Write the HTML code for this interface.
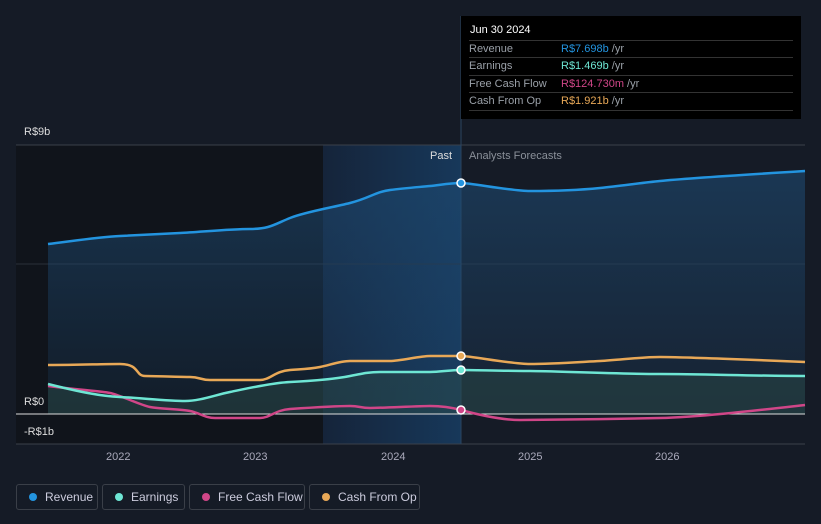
<!DOCTYPE html><html><head><style>
body{margin:0;width:821px;height:524px;background:#151b26;font-family:"Liberation Sans",sans-serif;overflow:hidden;position:relative}
.tt{position:absolute;left:461px;top:16px;width:340px;height:103px;background:#000;color:#fff;font-size:11px}
.tt .h{position:absolute;left:9px;top:8px;font-size:11px}
.tt .r{position:absolute;left:8px;width:324px;border-top:1px solid #333;height:17px;line-height:17px;color:#9aa0a8}
.tt .r span{position:absolute;left:92px}
.leg{position:absolute;top:484px;height:26px;border:1px solid #3a3f48;border-radius:3px;color:#ccd;font-size:12px;line-height:24px;box-sizing:border-box;padding-left:28px;white-space:nowrap}
.leg i{position:absolute;left:12px;top:8px;width:8px;height:8px;border-radius:50%}
.ax{position:absolute;color:#ddd;font-size:11px}
</style></head><body>
<svg width="821" height="524" style="position:absolute;left:0;top:0">
<defs><linearGradient id="hg" x1="0" x2="1"><stop offset="0" stop-color="#15243a"/><stop offset="1" stop-color="#17385a"/></linearGradient>
<linearGradient id="rf" x1="0" y1="0" x2="0" y2="1"><stop offset="0" stop-color="#1e4a72" stop-opacity=".6"/><stop offset="1" stop-color="#1e4a72" stop-opacity=".15"/></linearGradient></defs>
<rect x="16" y="145" width="307" height="299" fill="#10141b"/>
<rect x="323" y="145" width="138" height="299" fill="url(#hg)"/>
<line x1="16" y1="145" x2="805" y2="145" stroke="#3a404a"/>
<line x1="16" y1="264" x2="805" y2="264" stroke="#2a303a"/>
<line x1="16" y1="444" x2="805" y2="444" stroke="#3a404a"/>
<line x1="461" y1="16" x2="461" y2="444" stroke="#2a4560"/>
<path d="M48,244 C80,240 100,237 120,236 S160,234 180,233 S230,229 250,229 S275,224 290,218 S330,208 350,203 S375,192 390,190 S420,187 430,186 S450,183 461,183 S510,191 530,191 S580,190 600,188 S640,183 660,181 S740,175 805,171 L805,414 L48,414Z" fill="url(#rf)"/>
<path d="M48,384 C80,392 100,396 120,397 S170,401 185,401 S215,395 230,392 S270,383 290,382 S335,379 350,376 S370,372 380,372 S420,372 430,372 S450,370 461,370 S510,371 530,371 S620,374 660,374 S760,376 805,376 L805,414 L48,414Z" fill="#2a4a48" opacity=".5"/>
<line x1="16" y1="414" x2="805" y2="414" stroke="#ddd"/>
<g fill="none" stroke-width="2.5">
<path stroke="#2394df" d="M48,244 C80,240 100,237 120,236 S160,234 180,233 S230,229 250,229 S275,224 290,218 S330,208 350,203 S375,192 390,190 S420,187 430,186 S450,183 461,183 S510,191 530,191 S580,190 600,188 S640,183 660,181 S740,175 805,171"/>
<path stroke="#e8a857" d="M48,365 C80,365 100,364 120,364 S135,376 145,376 S180,377 190,377 S200,380 210,380 S250,380 260,380 S275,371 290,370 S310,369 320,367 S340,361 350,361 S380,361 390,361 S420,356 430,356 S450,356 461,356 S510,364 530,364 S580,362 600,361 S640,357 660,357 S760,360 805,362"/>
<path stroke="#d04688" d="M48,386 C80,390 100,391 110,393 S140,405 150,407 S180,409 190,411 S205,418 215,418 S250,418 260,418 S275,410 290,409 S340,406 350,406 S360,408 370,408 S420,406 430,406 S450,407 461,410 S500,420 520,420 S620,419 660,418 S760,410 805,405"/>
<path stroke="#6ee6d4" d="M48,384 C80,392 100,396 120,397 S170,401 185,401 S215,395 230,392 S270,383 290,382 S335,379 350,376 S370,372 380,372 S420,372 430,372 S450,370 461,370 S510,371 530,371 S620,374 660,374 S760,376 805,376"/>
</g>
<g stroke="#fff" stroke-width="1.5"><circle cx="461" cy="183" r="4" fill="#2394df"/><circle cx="461" cy="356" r="4" fill="#e8a857"/><circle cx="461" cy="370" r="4" fill="#6ee6d4"/><circle cx="461" cy="410" r="4" fill="#d04688"/></g>
</svg>
<div class="ax" style="left:24px;top:126px">R$9b</div>
<div class="ax" style="left:24px;top:396px">R$0</div>
<div class="ax" style="left:24px;top:426px">-R$1b</div>
<div class="ax" style="left:430px;top:150px">Past</div>
<div class="ax" style="left:469px;top:150px;color:#8a9099">Analysts Forecasts</div>
<div class="ax" style="left:106px;top:451px;color:#aab">2022</div>
<div class="ax" style="left:243px;top:451px;color:#aab">2023</div>
<div class="ax" style="left:381px;top:451px;color:#aab">2024</div>
<div class="ax" style="left:518px;top:451px;color:#aab">2025</div>
<div class="ax" style="left:655px;top:451px;color:#aab">2026</div>
<div class="tt"><div class="h">Jun 30 2024</div>
<div class="r" style="top:24px">Revenue<span><b style="font-weight:normal;color:#2394df">R$7.698b</b> /yr</span></div>
<div class="r" style="top:41px">Earnings<span><b style="font-weight:normal;color:#6ee6d4">R$1.469b</b> /yr</span></div>
<div class="r" style="top:59px">Free Cash Flow<span><b style="font-weight:normal;color:#d04688">R$124.730m</b> /yr</span></div>
<div class="r" style="top:76px;border-bottom:1px solid #333">Cash From Op<span><b style="font-weight:normal;color:#e8a857">R$1.921b</b> /yr</span></div>
</div>
<div class="leg" style="left:16px;width:82px"><i style="background:#2394df"></i>Revenue</div>
<div class="leg" style="left:102px;width:83px"><i style="background:#6ee6d4"></i>Earnings</div>
<div class="leg" style="left:189px;width:116px"><i style="background:#d04688"></i>Free Cash Flow</div>
<div class="leg" style="left:309px;width:111px"><i style="background:#e8a857"></i>Cash From Op</div>
</body></html>
